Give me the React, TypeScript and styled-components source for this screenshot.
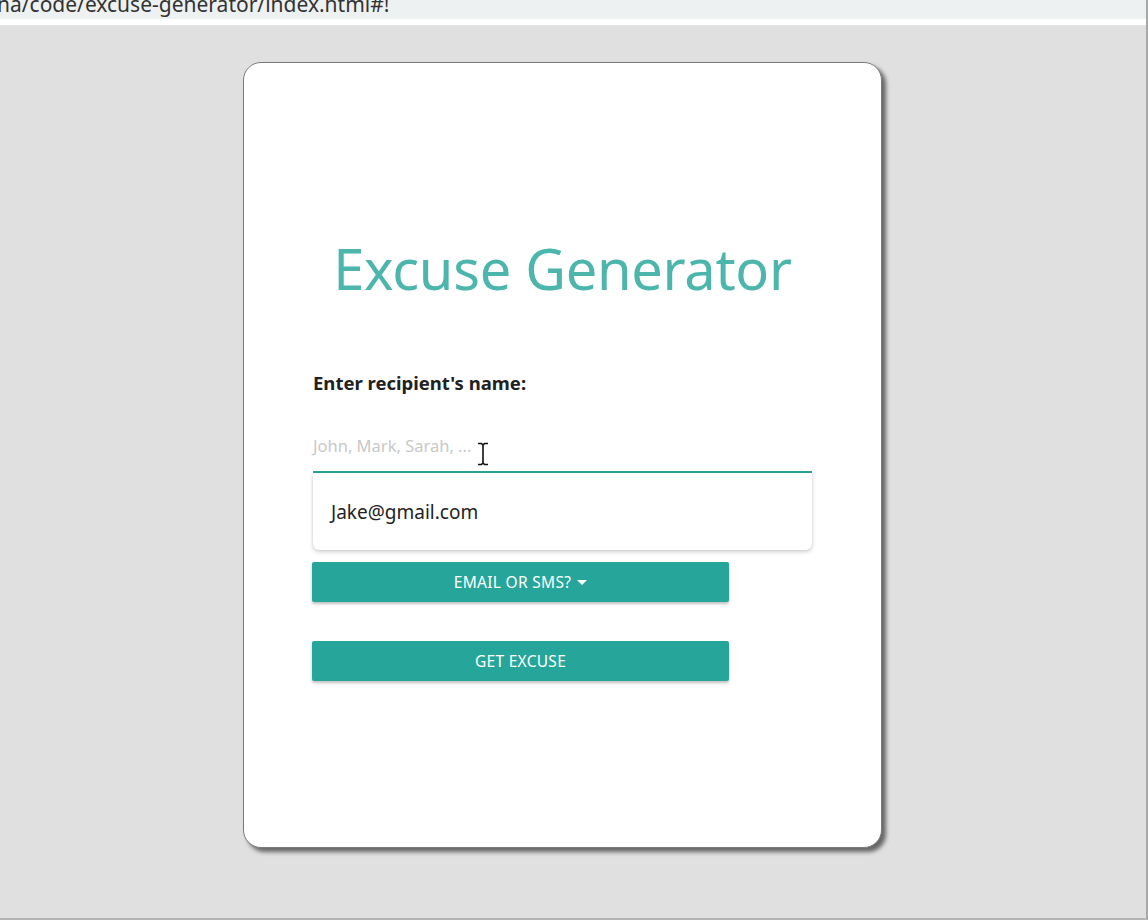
import React from "react";
import styled, { createGlobalStyle } from "styled-components";

const Global = createGlobalStyle`
  html, body { margin: 0; padding: 0; }
  body {
    width: 1148px;
    height: 920px;
    overflow: hidden;
    background: #e0e0e0;
    font-family: "Noto Sans", "Open Sans", sans-serif;
  }
`;

const Frame = styled.div`
  width: 1148px;
  height: 920px;
  box-sizing: border-box;
  border-right: 2px solid #a8a8a8;
  border-bottom: 2px solid #b4b4b4;
  display: flex;
  flex-direction: column;
`;

const AddressStrip = styled.div`
  height: 19px;
  background: #eef1f2;
  overflow: hidden;
  flex: none;
`;

const AddressText = styled.div`
  font-family: "Noto Sans", sans-serif;
  font-size: 21px;
  line-height: 21px;
  color: #333;
  margin-top: -6px;
  margin-left: -3px;
  white-space: nowrap;
`;

const WhiteGap = styled.div`
  height: 6px;
  background: #ffffff;
  flex: none;
`;

const Stage = styled.div`
  flex: 1;
  padding: 37px 0 0 243px;
`;

const Card = styled.div`
  width: 639px;
  height: 786px;
  box-sizing: border-box;
  background: #fff;
  border: 1px solid #7a7a7a;
  border-radius: 18px;
  box-shadow: 4px 4px 4px rgba(0, 0, 0, 0.55);
  padding: 165px 69px 0 69px;
`;

const Title = styled.h1`
  margin: 0;
  text-align: center;
  font-family: "Noto Sans", sans-serif;
  font-weight: 400;
  font-size: 56px;
  line-height: 80px;
  color: #4db6ac;
  letter-spacing: -0.3px;
`;

const Form = styled.div`
  margin-top: 63px;
  display: flex;
  flex-direction: column;
`;

const Label = styled.label`
  font-family: "Noto Sans", sans-serif;
  font-weight: 700;
  font-size: 18.5px;
  line-height: 24px;
  color: #212121;
`;

const FieldWrap = styled.div`
  position: relative;
  margin-top: 33px;
`;

const Input = styled.div`
  height: 45px;
  box-sizing: border-box;
  border-bottom: 2px solid #26a69a;
  display: flex;
  align-items: center;
  font-family: "Noto Sans", sans-serif;
  font-size: 16.5px;
  color: #c8c8c8;
  padding-bottom: 8px;
`;

const Suggestions = styled.div`
  position: absolute;
  left: 0;
  right: 0;
  top: 45px;
  height: 77px;
  background: #fff;
  border-radius: 0 0 6px 6px;
  box-shadow: 0 2px 4px rgba(0, 0, 0, 0.18), 0 0 2px rgba(0, 0, 0, 0.1);
  display: flex;
  align-items: center;
  padding-left: 18px;
  font-family: "Noto Sans", sans-serif;
  font-size: 19px;
  color: #222;
  z-index: 2;
`;

const Cursor = styled.svg`
  position: absolute;
  left: 163px;
  top: 14px;
  z-index: 3;
`;

const Spacer = styled.div<{ $h: number }>`
  height: ${(p) => p.$h}px;
`;

const Button = styled.button`
  width: 417px;
  height: 40px;
  border: none;
  border-radius: 2px;
  background: #26a69a;
  color: #fff;
  font-family: "Noto Sans", sans-serif;
  font-size: 15.5px;
  text-transform: uppercase;
  letter-spacing: 0.3px;
  box-shadow: 0 2px 3px rgba(0, 0, 0, 0.25);
  display: flex;
  align-items: center;
  justify-content: center;
  gap: 6px;
  padding: 0;
  margin-left: -1px;
`;

const Caret = styled.span`
  width: 0;
  height: 0;
  border-left: 5px solid transparent;
  border-right: 5px solid transparent;
  border-top: 5px solid #fff;
  margin-top: 1px;
`;

export default function App() {
  return (
    <>
      <Global />
      <Frame>
        <AddressStrip>
          <AddressText>na/code/excuse-generator/index.html#!</AddressText>
        </AddressStrip>
        <WhiteGap />
        <Stage>
          <Card>
            <Title>Excuse Generator</Title>
            <Form>
              <Label>Enter recipient's name:</Label>
              <FieldWrap>
                <Input>John, Mark, Sarah, ...</Input>
                <Cursor width="14" height="24" viewBox="0 0 14 24">
                  <path
                    d="M2 1.5h3.5L7 3l1.5-1.5H12M7 3v18M2 22.5h3.5L7 21l1.5 1.5H12"
                    fill="none"
                    stroke="#111"
                    strokeWidth="1.6"
                  />
                </Cursor>
                <Suggestions>Jake@gmail.com</Suggestions>
              </FieldWrap>
              <Spacer $h={89} />
              <Button>
                Email or SMS? <Caret />
              </Button>
              <Spacer $h={39} />
              <Button>Get Excuse</Button>
            </Form>
          </Card>
        </Stage>
      </Frame>
    </>
  );
}
